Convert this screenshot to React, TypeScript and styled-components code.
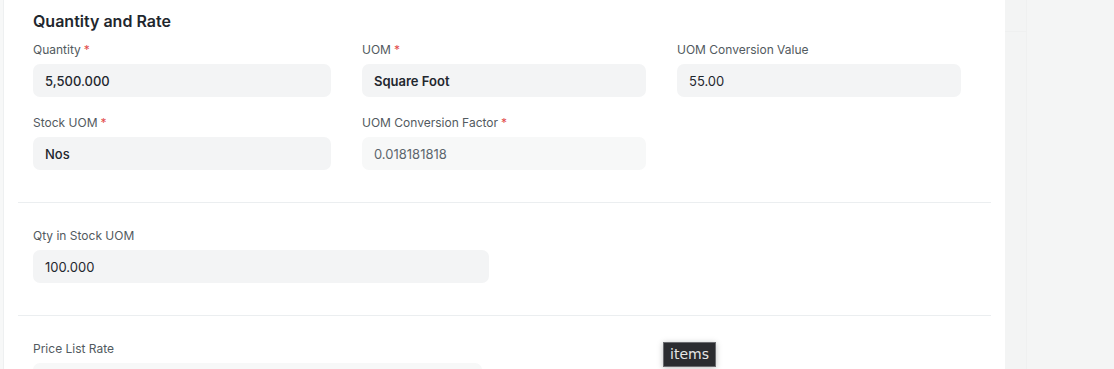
import React from 'react';
import styled, { createGlobalStyle } from 'styled-components';

const GlobalStyle = createGlobalStyle`
  html, body {
    margin: 0;
    padding: 0;
    background: #f4f5f5;
    font-family: 'Inter', 'Noto Sans', sans-serif;
    -webkit-font-smoothing: antialiased;
  }
`;

const Page = styled.div`
  display: flex;
  height: 369px;
  overflow: hidden;
  position: relative;
`;

const LeftGutter = styled.div`
  width: 3px;
  flex: none;
  background: #f7f8f8;
  border-right: 1px solid #eef0f1;
`;

const Card = styled.div`
  width: 1001px;
  flex: none;
  background: #ffffff;
  padding: 0 14px;
  box-sizing: border-box;
`;

const SideRail = styled.div`
  width: 21px;
  flex: none;
  background: #f3f4f4;
  border-right: 1px solid #eff0f0;
  display: flex;
  flex-direction: column;
`;

const RailTop = styled.div`
  height: 31px;
  border-bottom: 1px solid #eff0f0;
`;

const Section = styled.section<{ $first?: boolean }>`
  padding: ${(p) => (p.$first ? '9px' : '24px')} 15px 32px;
  border-bottom: 1px solid #ebeef0;
`;

const SectionHead = styled.h2`
  margin: 0 0 8px;
  font-size: 16px;
  line-height: 24px;
  font-weight: 600;
  color: #1f272e;
`;

const Grid = styled.div<{ $cols: string }>`
  display: grid;
  grid-template-columns: ${(p) => p.$cols};
  column-gap: 31px;
  row-gap: 17px;
`;

const Field = styled.div`
  display: flex;
  flex-direction: column;
`;

const Label = styled.label`
  font-size: 12px;
  line-height: 18px;
  color: #525a60;
  margin-bottom: 5px;
`;

const Req = styled.span`
  color: #e24c4c;
  margin-left: 3px;
`;

const Input = styled.div<{ $weight?: number; $readonly?: boolean }>`
  height: 33px;
  box-sizing: border-box;
  padding: 0 12px;
  display: flex;
  align-items: center;
  border-radius: 7px;
  background: ${(p) => (p.$readonly ? '#f7f8f8' : '#f3f4f5')};
  color: ${(p) => (p.$readonly ? '#5d666d' : '#1f272e')};
  font-size: 13px;
  font-weight: ${(p) => p.$weight ?? 400};
`;

const Tooltip = styled.div`
  position: absolute;
  left: 663px;
  top: 342px;
  padding: 2px 6px 3px;
  background: #2b2c30;
  border: 1px solid #6a6b6f;
  color: #e6e6e6;
  font-family: 'DejaVu Sans', sans-serif;
  font-size: 14px;
  line-height: 18px;
  box-shadow: 0 1px 6px rgba(0, 0, 0, 0.25);
`;

type FieldProps = {
  label: string;
  value?: string;
  required?: boolean;
  weight?: number;
  readonly?: boolean;
};

const FormField = ({ label, value, required, weight, readonly }: FieldProps) => (
  <Field>
    <Label>
      {label}
      {required && <Req>*</Req>}
    </Label>
    <Input $weight={weight} $readonly={readonly}>
      {value}
    </Input>
  </Field>
);

export default function App() {
  return (
    <>
      <GlobalStyle />
      <Page>
        <LeftGutter />
        <Card>
          <Section $first>
            <SectionHead>Quantity and Rate</SectionHead>
            <Grid $cols="298px 284px 284px">
              <FormField label="Quantity" required value="5,500.000" weight={500} />
              <FormField label="UOM" required value="Square Foot" weight={600} />
              <FormField label="UOM Conversion Value" value="55.00" />
              <FormField label="Stock UOM" required value="Nos" weight={500} />
              <FormField label="UOM Conversion Factor" required value="0.018181818" readonly />
            </Grid>
          </Section>
          <Section>
            <Grid $cols="456px">
              <FormField label="Qty in Stock UOM" value="100.000" />
            </Grid>
          </Section>
          <Section>
            <Grid $cols="449px">
              <FormField label="Price List Rate" readonly />
            </Grid>
          </Section>
        </Card>
        <SideRail>
          <RailTop />
        </SideRail>
        <Tooltip>items</Tooltip>
      </Page>
    </>
  );
}
